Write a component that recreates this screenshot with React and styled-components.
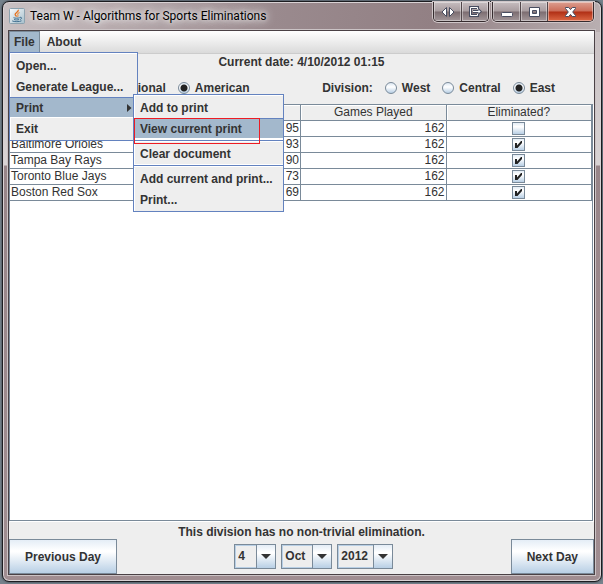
import React from "react";
import styled, { createGlobalStyle, css } from "styled-components";

const color = {
  text: "#333333",
  face: "#eeeeee",
  line: "#7a8a99",
  accent: "#6382bf",
  selected: "#a3b8cc",
  pale: "#b8cfe5",
};

const steel = "linear-gradient(#e4edf6 0, #ffffff 32%, #ffffff 36%, #b8cfe5 100%)";

const GlobalStyle = createGlobalStyle`
  * { box-sizing: border-box; }
  body {
    margin: 0;
    background: #75828c;
    color: ${color.text};
    font: bold 12px/16px "Liberation Sans", Arial, sans-serif;
  }
  button, select, input { font: inherit; color: inherit; margin: 0; }
`;

const Desktop = styled.div`
  display: flex;
  min-height: 100vh;
  padding: 1px 1px 2px 2px;
`;

const Frame = styled.div`
  flex: 1;
  min-width: 0;
  display: flex;
  flex-direction: column;
  padding: 0 6px 6px 5px;
  border: 1px solid #1c1c20;
  border-radius: 7px;
  box-shadow: inset 0 0 0 1px #d9d2d4, 0 0 2px #20252a;
  background:
    linear-gradient(100deg, #c9c1c3 0, #b6a9ac 20%, #9a8a8e 45%, #928084 72%, #b9afb1 100%) 0 0 / 100% 30px no-repeat,
    linear-gradient(#c4bbbd 0, #d8d3d4 163px, #978589 164px, #a08d91 100%);
`;

const TitleBar = styled.header`
  display: flex;
  justify-content: space-between;
  height: 28px;
`;

const Title = styled.h1`
  display: flex;
  align-items: center;
  gap: 5px;
  margin: 0;
  padding-left: 1px;
  color: #000;
  font: 12px/16px Roboto, "Open Sans", sans-serif;
  white-space: nowrap;
  text-shadow: 0 0 4px #eee, 0 0 8px #eee, 0 0 12px #ddd;
`;

const WindowControls = styled.div`
  display: flex;
  align-items: flex-start;
  gap: 3px;
  padding-right: 1px;
`;

const ControlGroup = styled.div`
  display: flex;
  height: 20px;
  border: 1px solid #352b2e;
  border-top: 0;
  border-radius: 0 0 5px 5px;
  box-shadow: 0 0 0 1px #cfc6c8;
  overflow: hidden;
`;

const ControlButton = styled.button`
  display: grid;
  place-items: center;
  width: ${(p) => (p.$close ? 46 : 27)}px;
  padding: 0;
  border: 0;
  box-shadow: inset 0 0 0 1px rgba(255, 255, 255, 0.4);
  background: ${(p) =>
    p.$close
      ? "linear-gradient(#dc9e90 0, #cb6c58 48%, #b02f15 52%, #dc6845 100%)"
      : "linear-gradient(#c6bdbf 0, #a89c9f 48%, #7c6d71 52%, #a3979a 100%)"};

  & + & { border-left: 1px solid #51464a; }
`;

const Client = styled.main`
  flex: 1;
  display: flex;
  flex-direction: column;
  border: 1px solid #4a4145;
  box-shadow: 0 0 0 1px #cbc3c5;
  background: ${color.face};
`;

const MenuBar = styled.nav`
  display: flex;
  align-items: flex-start;
  height: 23px;
  border-bottom: 1px solid #cccccc;
  background: linear-gradient(#ffffff, #dadada);
`;

const MenuHolder = styled.div`
  position: relative;
`;

const MenuButton = styled.button`
  display: block;
  height: ${(p) => (p.$open ? 21 : 22)}px;
  padding: 0 7px;
  border: 0;
  background: none;
  ${(p) =>
    p.$open &&
    css`
      padding: 0 4px;
      border-left: 1px solid ${color.line};
      border-right: 1px solid ${color.line};
      border-top: 1px solid ${color.line};
      background: ${color.selected};
    `}
`;

const Popup = styled.div`
  position: absolute;
  z-index: 2;
  top: ${(p) => (p.$sub ? -3 : 21)}px;
  left: ${(p) => (p.$sub ? 123 : 0)}px;
  width: ${(p) => (p.$sub ? 151 : 129)}px;
  padding: 2px 0 1px;
  border: 1px solid ${color.accent};
  box-shadow: inset 1px 1px #fff;
  background: ${color.face};
`;

const MenuItem = styled.button`
  display: flex;
  align-items: center;
  justify-content: space-between;
  width: 100%;
  height: 21px;
  padding: 0 5px 0 6px;
  border: 0;
  background: none;
  text-align: left;
  white-space: nowrap;
  ${(p) =>
    p.$active &&
    css`
      border-top: 1px solid ${color.accent};
      border-bottom: 1px solid #fff;
      background: ${color.selected};
    `}
`;

const Separator = styled.hr`
  height: 4px;
  margin: 0;
  border: 0;
  background: linear-gradient(#fff 1px, ${color.accent} 1px 2px, #fff 2px 3px, ${color.face} 3px);
`;

const Marker = styled.div`
  position: absolute;
  top: 23px;
  left: 0;
  width: 126px;
  height: 26px;
  border: 1px solid #ed1c24;
  pointer-events: none;
`;

const Message = styled.p`
  margin: 0;
  height: 17px;
  line-height: 17px;
  text-align: center;
`;

const Status = styled(Message)`
  line-height: 20px;
`;

const Options = styled.div`
  display: grid;
  grid-template-columns: 1fr 1fr;
  height: 33px;
`;

const Group = styled.fieldset`
  display: flex;
  align-items: center;
  justify-content: flex-end;
  gap: 12px;
  min-width: 0;
  margin: 0;
  padding: 0 ${(p) => p.$inset}px 0 0;
  border: 0;
`;

const Choice = styled.label`
  display: flex;
  align-items: center;
  gap: 5px;
`;

const Radio = styled.input`
  appearance: none;
  width: 12px;
  height: 12px;
  border: 1px solid ${color.line};
  border-radius: 50%;
  background: linear-gradient(#dce7f2, #ffffff 40%, #b8cfe5);
  &:checked {
    background:
      radial-gradient(circle, #222 0 3px, transparent 4px),
      linear-gradient(#dce7f2, #ffffff 40%, #b8cfe5);
  }
`;

const Pane = styled.div`
  flex: 1;
  margin: 0 1px 1px 0;
  border: 1px solid ${color.line};
  box-shadow: 1px 1px #fff;
  background: #fff;
`;

const Table = styled.table`
  width: 100%;
  table-layout: fixed;
  border-collapse: separate;
  border-spacing: 0;
  font-weight: normal;
`;

const Head = styled.th`
  height: 16px;
  padding: 0;
  border-right: 1px solid ${color.line};
  border-bottom: 1px solid ${color.line};
  box-shadow: inset 1px 1px #fff;
  background: ${color.face};
  font-weight: normal;
  line-height: 15px;
`;

const Cell = styled.td`
  height: 16px;
  padding: 0 1px;
  border-right: 1px solid ${color.line};
  border-bottom: 1px solid ${color.line};
  line-height: 15px;
  text-align: ${(p) => p.$align || "left"};
  white-space: nowrap;
`;

const CheckHolder = styled.label`
  display: grid;
  place-content: center;
  & > * { grid-area: 1 / 1; }
  & > svg { pointer-events: none; visibility: hidden; }
  & > input:checked + svg { visibility: visible; }
`;

const Check = styled.input`
  appearance: none;
  width: 13px;
  height: 13px;
  border: 1px solid ${color.line};
  background: ${steel};
`;

const Footer = styled.footer`
  display: flex;
  align-items: stretch;
  justify-content: space-between;
  height: 35px;
`;

const DayButton = styled.button`
  padding: 0 15px;
  border: 1px solid ${color.line};
  background: ${steel};
  white-space: nowrap;
`;

const DateFields = styled.div`
  display: flex;
  align-items: center;
  gap: 5px;
  padding-bottom: 1px;
`;

const Combo = styled.div`
  display: grid;
  grid-template-columns: 1fr 19px;
  width: ${(p) => p.$width}px;
  height: 25px;
  border: 1px solid ${color.line};
`;

const Select = styled.select`
  grid-area: 1 / 1 / 2 / 3;
  appearance: none;
  width: 100%;
  padding: 0 20px 0 2px;
  border: 1px solid ${color.pale};
  border-radius: 0;
  background: ${color.face};
`;

const ComboArrow = styled.span`
  grid-area: 1 / 2;
  z-index: 1;
  display: grid;
  place-items: center;
  border-left: 1px solid ${color.line};
  background: ${steel};
  pointer-events: none;
`;

const JavaIcon = () => (
  <svg width="16" height="16" viewBox="0 0 16 16" aria-hidden="true">
    <defs>
      <linearGradient id="tile" x1="0" y1="0" x2="1" y2="1">
        <stop offset="0" stopColor="#fafcfd" />
        <stop offset="1" stopColor="#a5bfcc" />
      </linearGradient>
    </defs>
    <rect x=".5" y=".5" width="15" height="15" rx="1" fill="url(#tile)" stroke="#8ba1ae" />
    <path d="M9.3 1.8C10 4 5.600 4.700 6.100 6.600c.2.800 1.200 1.100 1.300 2" fill="none" stroke="#e66f1c" strokeWidth="1.300" />
    <path d="M10.600 4.600C8.200 5.600 8.500 6.400 9 7.300c.2.600-.1 1-.6 1.400" fill="none" stroke="#ee9145" strokeWidth="1.100" />
    <path d="M4.500 9.700c1.500.7 4.800.6 6.200 0M5 11.500c1.300.6 3.900.6 5.100 0M3.200 12.900c1.800 1.100 7.600 1 9.300-.1M11 9.300c2.200-.4 2.100 1.600.1 2.200" fill="none" stroke="#416f90" strokeWidth="1" />
  </svg>
);

const glyph = { fill: "#fff", stroke: "#484d60", strokeWidth: 1 };

const SwapIcon = () => (
  <svg width="14" height="12" viewBox="0 0 14 12" aria-hidden="true">
    <path d="M5.500 1.500v9L1 6zM8.500 1.500v9L13 6z" {...glyph} />
  </svg>
);

const ExitIcon = () => (
  <svg width="14" height="13" viewBox="0 0 14 13" fill="none" aria-hidden="true">
    <path d="M9.500 4V2.500h-7v8h7V9M5 6.500h7M10 4.500l2 2-2 2" stroke="#484d60" strokeWidth="3" />
    <path d="M9.500 4V2.500h-7v8h7V9M5 6.500h7M10 4.500l2 2-2 2" stroke="#fff" />
  </svg>
);

const MinimizeIcon = () => (
  <svg width="14" height="12" viewBox="0 0 14 12" aria-hidden="true">
    <rect x="1.500" y="6.500" width="11" height="4" rx="1" {...glyph} />
  </svg>
);

const MaximizeIcon = () => (
  <svg width="13" height="12" viewBox="0 0 13 12" aria-hidden="true">
    <path d="M1.500 1.500h10v9h-10zM4.500 4.500v3h4v-3z" fillRule="evenodd" {...glyph} />
  </svg>
);

const CloseIcon = () => (
  <svg width="13" height="12" viewBox="0 0 13 12" aria-hidden="true">
    <path d="M1.500 1.500h3.200L6.500 3.600l1.800-2.100h3.200v1L8.700 6l2.800 3.500v1H8.300L6.500 8.400l-1.800 2.100H1.500v-1L4.300 6 1.500 2.500z" {...glyph} />
  </svg>
);

const SubmenuArrow = () => (
  <svg width="5" height="8" viewBox="0 0 5 8" aria-hidden="true">
    <path d="M0 0l4.500 4L0 8z" fill="#333" />
  </svg>
);

const DownArrow = () => (
  <svg width="10" height="5" viewBox="0 0 10 5" aria-hidden="true">
    <path d="M0 0h10L5 5z" fill="#333" />
  </svg>
);

const Tick = () => (
  <svg width="13" height="13" viewBox="0 0 13 13" aria-hidden="true">
    <path d="M3 5h2v2.500L9 3h1v2L5.500 10H3z" fill="#222" />
  </svg>
);

const teams = [
  { name: "", wins: 95, played: 162, out: false },
  { name: "Baltimore Orioles", wins: 93, played: 162, out: true },
  { name: "Tampa Bay Rays", wins: 90, played: 162, out: true },
  { name: "Toronto Blue Jays", wins: 73, played: 162, out: true },
  { name: "Boston Red Sox", wins: 69, played: 162, out: true },
];

function RadioGroup({ label, title, name, options, value, inset }) {
  return (
    <Group $inset={inset} aria-label={title}>
      {label && <span>{label}</span>}
      {options.map((option) => (
        <Choice key={option}>
          <Radio type="radio" name={name} defaultChecked={option === value} />
          {option}
        </Choice>
      ))}
    </Group>
  );
}

function ComboBox({ label, options, value, width }) {
  return (
    <Combo $width={width}>
      <Select aria-label={label} defaultValue={value}>
        {options.map((option) => (
          <option key={option}>{option}</option>
        ))}
      </Select>
      <ComboArrow>
        <DownArrow />
      </ComboArrow>
    </Combo>
  );
}

function FileMenu() {
  return (
    <MenuHolder>
      <MenuButton $open aria-expanded="true">File</MenuButton>
      <Popup>
        <MenuItem>Open...</MenuItem>
        <MenuItem>Generate League...</MenuItem>
        <MenuHolder>
          <MenuItem $active aria-expanded="true">
            Print
            <SubmenuArrow />
          </MenuItem>
          <Popup $sub>
            <MenuItem>Add to print</MenuItem>
            <MenuItem $active>View current print</MenuItem>
            <Separator />
            <MenuItem>Clear document</MenuItem>
            <Separator />
            <MenuItem>Add current and print...</MenuItem>
            <MenuItem>Print...</MenuItem>
            <Marker />
          </Popup>
        </MenuHolder>
        <MenuItem>Exit</MenuItem>
      </Popup>
    </MenuHolder>
  );
}

export default function App() {
  return (
    <Desktop>
      <GlobalStyle />
      <Frame>
        <TitleBar>
          <Title>
            <JavaIcon />
            Team W - Algorithms for Sports Eliminations
          </Title>
          <WindowControls>
            <ControlGroup>
              <ControlButton aria-label="Move to other screen"><SwapIcon /></ControlButton>
              <ControlButton aria-label="Send to screen"><ExitIcon /></ControlButton>
            </ControlGroup>
            <ControlGroup>
              <ControlButton aria-label="Minimize"><MinimizeIcon /></ControlButton>
              <ControlButton aria-label="Maximize"><MaximizeIcon /></ControlButton>
              <ControlButton $close aria-label="Close"><CloseIcon /></ControlButton>
            </ControlGroup>
          </WindowControls>
        </TitleBar>
        <Client>
          <MenuBar>
            <FileMenu />
            <MenuButton>About</MenuButton>
          </MenuBar>
          <Message>Current date: 4/10/2012 01:15</Message>
          <Options>
            <RadioGroup title="League" name="league" options={["National", "American"]} value="American" inset={52} />
            <RadioGroup
              label="Division:"
              title="Division"
              name="division"
              options={["West", "Central", "East"]}
              value="East"
              inset={39}
            />
          </Options>
          <Pane>
            <Table>
              <thead>
                <tr>
                  <Head>Team</Head>
                  <Head>Wins</Head>
                  <Head>Games Played</Head>
                  <Head>Eliminated?</Head>
                </tr>
              </thead>
              <tbody>
                {teams.map((team) => (
                  <tr key={team.wins}>
                    <Cell>{team.name}</Cell>
                    <Cell $align="right">{team.wins}</Cell>
                    <Cell $align="right">{team.played}</Cell>
                    <Cell>
                      <CheckHolder>
                        <Check type="checkbox" aria-label={`${team.name} eliminated`} defaultChecked={team.out} />
                        <Tick />
                      </CheckHolder>
                    </Cell>
                  </tr>
                ))}
              </tbody>
            </Table>
          </Pane>
          <Status>This division has no non-trivial elimination.</Status>
          <Footer>
            <DayButton>Previous Day</DayButton>
            <DateFields>
              <ComboBox label="Day" options={["3", "4", "5"]} value="4" width={42} />
              <ComboBox label="Month" options={["Sep", "Oct", "Nov"]} value="Oct" width={51} />
              <ComboBox label="Year" options={["2011", "2012", "2013"]} value="2012" width={56} />
            </DateFields>
            <DayButton>Next Day</DayButton>
          </Footer>
        </Client>
      </Frame>
    </Desktop>
  );
}
